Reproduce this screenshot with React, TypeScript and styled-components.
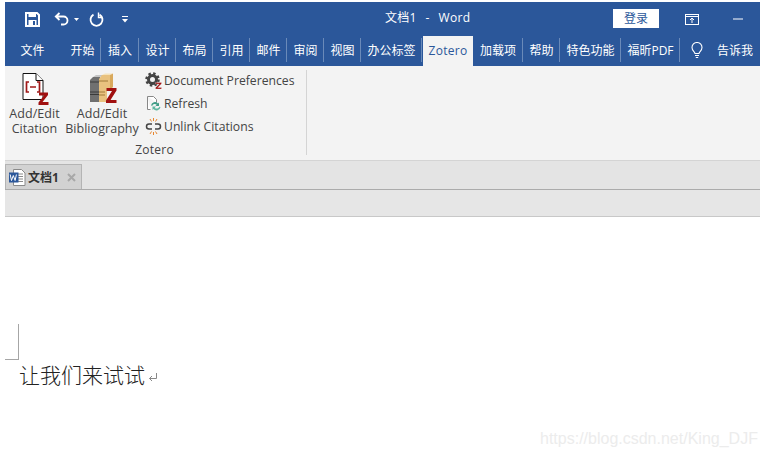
import React from 'react';
import styled, { createGlobalStyle } from 'styled-components';

const GlobalStyle = createGlobalStyle`
  html, body { margin: 0; padding: 0; background: #fff; }
  body { width: 766px; height: 456px; overflow: hidden; font-family: "Open Sans", "Noto Sans CJK SC", sans-serif; }
`;

const Page = styled.div`
  width: 766px;
  height: 456px;
  padding: 2px 6px 0 5px;
  box-sizing: border-box;
  position: relative;
  display: flex;
  flex-direction: column;
`;

const TitleBar = styled.div`
  height: 34px;
  background: #2b579a;
  display: flex;
  align-items: center;
  color: #fff;
  position: relative;
`;

const QuickAccess = styled.div`
  display: flex;
  align-items: center;
  padding: 0 0 0 20px;
  height: 100%;
`;

const QuickIcon = styled.svg<{ $gap?: number }>`
  display: block;
  margin-right: ${({ $gap }) => $gap ?? 0}px;
`;

const WindowTitle = styled.div`
  position: absolute;
  left: 380px;
  top: 7px;
  font-size: 12px;
  line-height: 18px;
  white-space: pre;
  letter-spacing: 0.3px;
  word-spacing: 1px;
`;

const WindowControls = styled.div`
  margin-left: auto;
  display: flex;
  align-items: center;
  padding-right: 17px;
`;

const LoginButton = styled.div`
  width: 46px;
  height: 19px;
  margin-top: -1px;
  background: #fff;
  color: #2b579a;
  font-size: 12px;
  line-height: 19px;
  text-align: center;
  margin-right: 26px;
`;

const TabBar = styled.div`
  height: 30px;
  background: #2b579a;
  display: flex;
  align-items: stretch;
  color: #fff;
  font-size: 12px;
`;

const Tab = styled.div<{ $w: number; $divider?: boolean; $active?: boolean; $inset?: number }>`
  width: ${({ $w }) => $w}px;
  box-sizing: border-box;
  display: flex;
  align-items: center;
  justify-content: center;
  position: relative;
  padding-bottom: 2px;
  padding-left: ${({ $inset }) => $inset ?? 0}px;
  background: ${({ $active }) => ($active ? '#f3f3f3' : 'transparent')};
  color: ${({ $active }) => ($active ? '#2b579a' : '#fff')};
  font-size: 12px;
  letter-spacing: ${({ $active }) => ($active ? '0.3px' : '0')};

  ${({ $divider }) =>
    $divider
      ? `&::after {
          content: '';
          position: absolute;
          right: 0;
          top: 2px;
          bottom: 4px;
          width: 1px;
          background: #6a8ab9;
        }`
      : ''}
`;

const BulbTab = styled.div`
  width: 37px;
  display: flex;
  align-items: center;
  justify-content: flex-end;
  padding: 0 14px 1px 0;
  box-sizing: border-box;
`;

const Ribbon = styled.div`
  height: 94px;
  background: #f3f3f3;
  border-bottom: 1px solid #d4d4d4;
  display: flex;
  color: #444;
`;

const Group = styled.div`
  width: 301px;
  margin: 4px 0 5px;
  border-right: 1px solid #d4d4d4;
  display: flex;
  flex-direction: column;
`;

const GroupBody = styled.div`
  flex: 1;
  display: flex;
`;

const GroupLabel = styled.div`
  font-size: 12px;
  line-height: 16px;
  text-align: center;
  margin: 0 2px -3px 0;
  letter-spacing: 0.25px;
`;

const LargeButton = styled.div<{ $w: number }>`
  width: ${({ $w }) => $w}px;
  display: flex;
  flex-direction: column;
  align-items: center;
  font-size: 12.5px;
  line-height: 15px;
  text-align: center;
  padding-top: 2px;
  white-space: nowrap;
  letter-spacing: 0.05px;
`;

const LargeIcon = styled.svg`
  display: block;
  margin-bottom: 1px;
`;

const SmallColumn = styled.div`
  display: flex;
  flex-direction: column;
  padding: 0 0 0 5px;
  margin-top: -1px;
`;

const SmallButton = styled.div`
  height: 23px;
  display: flex;
  align-items: center;
  gap: 2px;
  font-size: 12.2px;
  white-space: nowrap;
`;

const DocStrip = styled.div`
  height: 25px;
  padding-top: 3px;
  background: #e4e4e4;
  border-bottom: 1px solid #ababab;
  display: flex;
  align-items: flex-end;
`;

const DocTab = styled.div`
  width: 77px;
  height: 25px;
  box-sizing: border-box;
  background: #d2d2d2;
  border-right: 1px solid #b4b4b4;
  border-top: 1px solid #b4b4b4;
  border-left: 1px solid #b4b4b4;
  display: flex;
  align-items: center;
  padding-left: 3px;
  gap: 2px;
`;

const DocName = styled.span`
  font-size: 12px;
  font-weight: 700;
  color: #333;
  flex: 1;
`;

const CloseMark = styled.svg`
  display: block;
  margin-right: 5px;
`;

const Ruler = styled.div`
  height: 26px;
  background: #e6e6e6;
  border-bottom: 1px solid #c8c8c8;
`;

const Canvas = styled.div`
  flex: 1;
  background: #fff;
  padding-top: 107px;
`;

const CropMark = styled.div`
  width: 13px;
  height: 35px;
  border-right: 1px solid #a6a6a6;
  border-bottom: 1px solid #a6a6a6;
`;

const Paragraph = styled.div`
  margin: -1px 0 0 14px;
  display: flex;
  align-items: center;
  height: 30px;
  font-family: "Noto Sans CJK SC", sans-serif;
  font-size: 21px;
  font-weight: 300;
  color: #222;
`;

const ReturnMark = styled.svg`
  margin: 6px 0 0 3px;
  display: block;
`;

const Watermark = styled.div`
  position: absolute;
  left: 540px;
  top: 430px;
  font-family: "Liberation Sans", sans-serif;
  font-size: 16px;
  line-height: 18px;
  color: #ececec;
  white-space: nowrap;
`;

const SaveIcon = () => (
  <QuickIcon $gap={14} width="15" height="15" viewBox="0 0 15 15">
    <path d="M1 1h11l2 2v11H1z" fill="none" stroke="#fff" strokeWidth="2" />
    <rect x="3.500" y="1" width="7.500" height="4" fill="#fff" />
    <rect x="3.500" y="8" width="8" height="5" fill="#fff" />
    <rect x="8" y="9" width="2" height="4" fill="#2b579a" />
  </QuickIcon>
);

const UndoIcon = () => (
  <QuickIcon $gap={5} width="15" height="14" viewBox="0 0 15 14">
    <path d="M5.500 1 1.800 4.500 5.500 8M2 4.500h7.500a4 4 0 0 1 0 8H7" fill="none" stroke="#fff" strokeWidth="1.800" />
  </QuickIcon>
);

const Caret = ({ gap }: { gap: number }) => (
  <QuickIcon $gap={gap} width="5" height="3" viewBox="0 0 5 3">
    <path d="M0 0h5L2.500 3z" fill="#fff" />
  </QuickIcon>
);

const RedoIcon = () => (
  <QuickIcon $gap={18} width="15" height="15" viewBox="0 0 15 15">
    <path d="M4.500 2.600a6 6 0 1 0 6 0" fill="none" stroke="#fff" strokeWidth="1.800" />
    <path d="M9.500 .5v5h4" fill="none" stroke="#fff" strokeWidth="1.400" />
  </QuickIcon>
);

const CustomizeIcon = () => (
  <QuickIcon width="6" height="7" viewBox="0 0 6 7">
    <rect width="6" height="1" fill="#fff" />
    <path d="M0 3h6L3 6.500z" fill="#fff" />
  </QuickIcon>
);

const RibbonDisplayIcon = () => (
  <QuickIcon $gap={34} width="14" height="11" viewBox="0 0 14 11">
    <rect x="0.5" y="0.5" width="13" height="10" fill="none" stroke="#fff" />
    <path d="M0.500 2.500h13M7 9V4.500M5 6l2-2 2 2" fill="none" stroke="#fff" />
  </QuickIcon>
);

const MinimizeIcon = () => (
  <QuickIcon width="10" height="2" viewBox="0 0 10 2">
    <rect y="0.5" width="10" height="1" fill="#fff" />
  </QuickIcon>
);

const BulbIcon = () => (
  <svg width="12" height="17" viewBox="0 0 12 17">
    <path d="M4 11.500C3.500 9.500 1 8.500 1 5.500a5 5 0 0 1 10 0c0 3-2.500 4-3 6z" fill="none" stroke="#fff" strokeWidth="1.100" />
    <path d="M4 13.500h4M4.800 15.500h2.400" stroke="#fff" strokeWidth="1.100" />
  </svg>
);

const CitationIcon = () => (
  <LargeIcon width="28" height="33" viewBox="0 0 28 33">
    <path d="M2 1.500h13l7 7v19H2z" fill="#fff" stroke="#111" />
    <path d="M15 1.500v7h7" fill="#fff" stroke="#111" />
    <path d="M8 10H5.500v10H8M16 10h2.500v10H16M9 15h6" fill="none" stroke="#a01818" strokeWidth="1.700" />
    <path d="M18 20.500h9v2.500l-5.500 7H27.500v3H17.500v-2.500l5.500-7h-5z" fill="#a01010" />
  </LargeIcon>
);

const BibliographyIcon = () => (
  <LargeIcon width="30" height="33" viewBox="0 0 30 33">
    <path d="M3 8l3-3h7v25H3z" fill="#707070" />
    <path d="M6 5l3-2h8l-4 2z" fill="#c4c4c4" />
    <path d="M3 10h9M3 20h9M3 22.500h9" stroke="#3a3a3a" />
    <path d="M12 7l3-4h8v15h-3v12h-8z" fill="#e9c27f" />
    <path d="M15 3l3-1.500h8L23 3z" fill="#f5e3bc" />
    <path d="M23 3l3-1.500V15l-3 3z" fill="#d9a95c" />
    <path d="M12 9h9M12 20h6M12 23h6" stroke="#a07a3a" />
    <path d="M19.500 16h10v2.500L23.500 28h6v3H19v-2.500L25 19h-5.500z" fill="#a01010" />
  </LargeIcon>
);

const PrefsIcon = () => (
  <svg width="17" height="17" viewBox="0 0 17 17">
    <circle cx="7.500" cy="7.500" r="4" fill="none" stroke="#444" strokeWidth="3" />
    <circle cx="7.500" cy="7.500" r="6" fill="none" stroke="#444" strokeWidth="2.500" strokeDasharray="2.400 2.300" />
    <path d="M10.500 10.500h6v1.300l-3.700 3.700h3.700V17h-6v-1.300l3.700-3.700h-3.700z" fill="#a01010" stroke="#f3f3f3" strokeWidth="0.300" />
  </svg>
);

const RefreshIcon = () => (
  <svg width="17" height="17" viewBox="0 0 17 17">
    <path d="M2.500 1.500h6l3 3v3M2.500 1.500v13h3" fill="#fff" stroke="#888" />
    <path d="M6 10.500a4 4 0 0 1 7-2l1-1v3.500h-3.500l1.200-1.200a2.600 2.600 0 0 0-4.400.9z" fill="#3f9c86" />
    <path d="M15.500 12a4 4 0 0 1-7 2l-1 1v-3.500H11l-1.200 1.200a2.600 2.600 0 0 0 4.400-.9z" fill="#5fb7a0" />
  </svg>
);

const UnlinkIcon = () => (
  <svg width="17" height="17" viewBox="0 0 17 17">
    <path d="M7 6H4a2.500 2.500 0 0 0 0 5h3M10 6h3a2.500 2.500 0 0 1 0 5h-3" fill="none" stroke="#444" strokeWidth="1.500" />
    <path d="M8.500 0v3M5 1l1.500 2.500M12 1l-1.500 2.500M8.500 14v3M5 16l1.500-2.500M12 16l-1.500-2.500" stroke="#e8862e" />
  </svg>
);

const WordDocIcon = () => (
  <svg width="17" height="17" viewBox="0 0 17 17">
    <path d="M4.500.5h8l3.500 3.500v12.500H4.500z" fill="#fff" stroke="#8a8a8a" />
    <path d="M8 5h6M8 7.500h6M8 10h6M8 12.500h6" stroke="#8a8a8a" />
    <rect y="3.500" width="9.500" height="10" fill="#2b579a" />
    <path d="M1.200 5.500l1.300 6 1.800-5 1.800 5 1.300-6" fill="none" stroke="#fff" />
  </svg>
);

const App = () => {
  return (
    <Page>
      <GlobalStyle />
      <TitleBar>
        <QuickAccess>
          <SaveIcon />
          <UndoIcon />
          <Caret gap={10} />
          <RedoIcon />
          <CustomizeIcon />
        </QuickAccess>
        <WindowTitle>文档1  -  Word</WindowTitle>
        <WindowControls>
          <LoginButton>登录</LoginButton>
          <RibbonDisplayIcon />
          <MinimizeIcon />
        </WindowControls>
      </TitleBar>
      <TabBar>
        <Tab $w={55}>文件</Tab>
        <Tab $w={41} $inset={4} $divider>开始</Tab>
        <Tab $w={38} $divider>插入</Tab>
        <Tab $w={37} $divider>设计</Tab>
        <Tab $w={37} $divider>布局</Tab>
        <Tab $w={37} $divider>引用</Tab>
        <Tab $w={37} $divider>邮件</Tab>
        <Tab $w={37} $divider>审阅</Tab>
        <Tab $w={37} $divider>视图</Tab>
        <Tab $w={61} $divider>办公标签</Tab>
        <Tab $w={1} />
        <Tab $w={50} $active>Zotero</Tab>
        <Tab $w={50} $divider>加载项</Tab>
        <Tab $w={37} $divider>帮助</Tab>
        <Tab $w={61} $divider>特色功能</Tab>
        <Tab $w={59} $divider>福昕PDF</Tab>
        <BulbTab><BulbIcon /></BulbTab>
        <Tab $w={36}>告诉我</Tab>
      </TabBar>
      <Ribbon>
        <Group>
          <GroupBody>
            <LargeButton $w={59}>
              <CitationIcon />
              <div>Add/Edit<br />Citation</div>
            </LargeButton>
            <LargeButton $w={76}>
              <BibliographyIcon />
              <div>Add/Edit<br />Bibliography</div>
            </LargeButton>
            <SmallColumn>
              <SmallButton><PrefsIcon />Document Preferences</SmallButton>
              <SmallButton><RefreshIcon />Refresh</SmallButton>
              <SmallButton><UnlinkIcon />Unlink Citations</SmallButton>
            </SmallColumn>
          </GroupBody>
          <GroupLabel>Zotero</GroupLabel>
        </Group>
      </Ribbon>
      <DocStrip>
        <DocTab>
          <WordDocIcon />
          <DocName>文档1</DocName>
          <CloseMark width="9" height="9" viewBox="0 0 9 9">
            <path d="M1 1l7 7M8 1L1 8" stroke="#a8a8a8" strokeWidth="2" />
          </CloseMark>
        </DocTab>
      </DocStrip>
      <Ruler />
      <Canvas>
        <CropMark />
        <Paragraph>
          让我们来试试
          <ReturnMark width="10" height="10" viewBox="0 0 10 10">
            <path d="M8.500 1v5.500H1.500M4 4 1.500 6.500 4 9" fill="none" stroke="#888" />
          </ReturnMark>
        </Paragraph>
      </Canvas>
      <Watermark>https://blog.csdn.net/King_DJF</Watermark>
    </Page>
  );
};

export default App;
